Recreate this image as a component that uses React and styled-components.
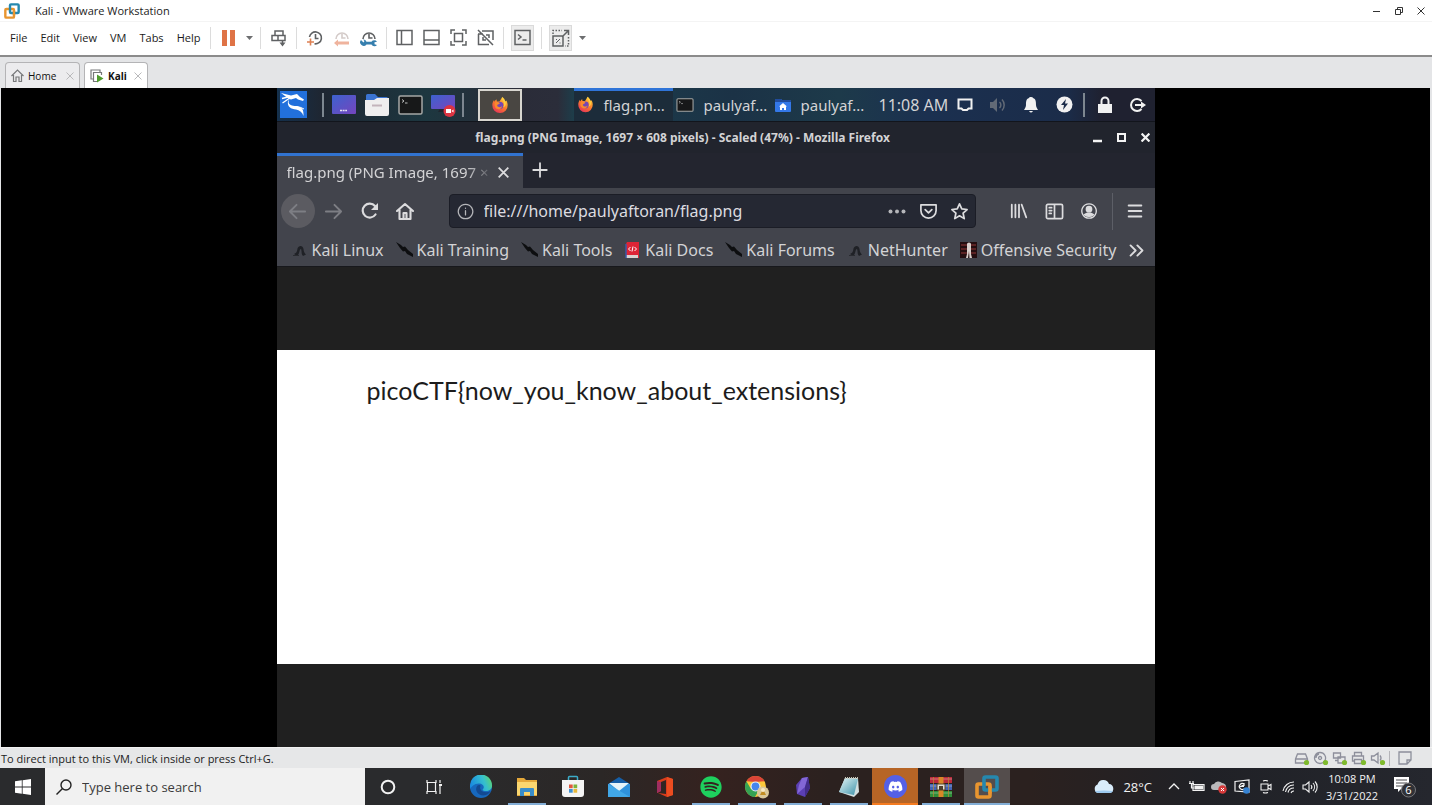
import React from "react";
import styled, { createGlobalStyle, css } from "styled-components";
import { FaDiscord, FaSpotify } from "react-icons/fa";

const GlobalStyle = createGlobalStyle`
  * {
    box-sizing: border-box;
  }
  body {
    margin: 0;
    background: #fff;
  }
  button, input {
    font: inherit;
    color: inherit;
    border: 0;
    padding: 0;
    margin: 0;
    background: none;
    outline: none;
  }
  svg {
    display: block;
    flex: none;
  }
`;

const Desktop = styled.div`
  min-height: 100vh;
  display: flex;
  flex-direction: column;
  font-family: "Open Sans", "Noto Sans", sans-serif;
  font-size: 11px;
  color: #1b1b1b;
`;

const Stroke = styled.svg.attrs({ fill: "none" })`
  stroke: currentColor;
  stroke-width: ${(p) => p.$w || 1.5};
`;

/* VMware window */

const TitleBar = styled.header`
  height: 22px;
  display: flex;
  align-items: center;
  padding-left: 4px;
  gap: 15px;
  border-bottom: 1px solid #f4f4f4;
`;

const WindowButtons = styled.div`
  display: flex;
  margin-left: auto;
`;

const WindowButton = styled.button`
  width: 22px;
  height: 20px;
  display: grid;
  place-items: center;
  color: #333;
`;

const MenuBar = styled.nav`
  height: 35px;
  display: flex;
  align-items: center;
  padding: 0 0 2px 3px;
  border-bottom: 2px solid #8b8b8b;
`;

const MenuItem = styled.button`
  padding: 0 6px 0 7px;
  height: 24px;
`;

const Separator = styled.span`
  width: 1px;
  height: 22px;
  margin: 0 4px;
  background: #dcdcdc;
`;

const Tool = styled.button`
  width: 27px;
  height: 26px;
  display: grid;
  place-items: center;
  color: #5f6163;
  ${(p) =>
    p.$pressed &&
    css`
      width: 23px;
      margin: 0 3px;
      background: #ececec;
      border: 1px solid #dadada;
    `}
`;

const Caret = styled.button`
  width: 14px;
  height: 24px;
  display: grid;
  place-items: center;
  color: #6d6e70;
`;

const TabStrip = styled.div`
  height: 31px;
  display: flex;
  align-items: flex-end;
  gap: 4px;
  padding-left: 5px;
  background: #e4e5e7;
`;

const VmTab = styled.button`
  height: 26px;
  width: ${(p) => (p.$active ? 64 : 75)}px;
  display: flex;
  align-items: center;
  padding: 0 5px;
  gap: 4px;
  border: 1px solid #b4b4b6;
  border-bottom: 0;
  border-radius: 4px 4px 0 0;
  background: ${(p) => (p.$active ? "#fff" : "#ececee")};
  font-size: 10px;
  font-weight: ${(p) => (p.$active ? 700 : 500)};
  color: #111;

  svg:last-child {
    margin-left: auto;
    color: #b9b9bb;
  }
`;

const Screen = styled.main`
  flex: 1;
  display: flex;
  justify-content: center;
  background: #000;
  border: solid #e4e5e7;
  border-width: 0 2px 0 1px;
`;

const StatusBar = styled.footer`
  height: 21px;
  display: flex;
  align-items: center;
  justify-content: space-between;
  background: #e6e7e8;
  padding: 0 20px 0 1px;
  border-top: 1px solid #f2f2f2;
`;

const Devices = styled.div`
  display: flex;
  align-items: center;
  gap: 3px;
  color: #8d8f9b;
`;

const DeviceDivider = styled.span`
  width: 1px;
  height: 15px;
  margin-right: 5px;
  background: #b5b5b9;
`;

/* Kali desktop inside the VM */

const Guest = styled.section`
  width: 100%;
  max-width: 878px;
  display: flex;
  flex-direction: column;
  background: #202020;
  color: #d3d3d5;
  font-family: "Noto Sans", sans-serif;
  font-size: 16px;
`;

const Panel = styled.div`
  height: 34px;
  display: flex;
  align-items: stretch;
  background: linear-gradient(90deg, #14304c 0, #1e2632 5%, #1d3740 17%, #2a2c38 27%, #2b2d3a 32%, #1c3f4c 34%, #1b3246 52%, #1d3a4a 64%, #1b3050 74%, #1b2c49 90%, #1f2130 94%);
  border-bottom: 1px solid #12151c;
`;

const PanelButton = styled.button`
  width: 33px;
  display: grid;
  place-items: center;
  color: ${(p) => (p.$dim ? "#626a76" : "#f1f1f1")};
`;

const PanelDivider = styled.span`
  width: 2px;
  height: 24px;
  align-self: center;
  margin: 0 4px 0 ${(p) => p.$before || 2}px;
  background: #7d8790;
`;

const Launcher = styled.button`
  width: 44px;
  height: 32px;
  margin: 1px 0 0 10px;
  display: grid;
  place-items: center;
  background: #494642;
  border: 2px solid #d8d6d0;
`;

const Tasks = styled.div`
  display: flex;
  margin-left: auto;
`;

const Task = styled.button`
  width: 99px;
  display: flex;
  align-items: center;
  gap: 10px;
  padding-left: 3px;
  font-size: 15px;
  white-space: nowrap;
  ${(p) =>
    p.$active &&
    css`
      background: linear-gradient(#2f74d8 3px, #1c2c3a 3px);
    `}
`;

const Time = styled.time`
  width: 78px;
  padding-left: 8px;
  align-self: center;
  white-space: nowrap;
`;

const FirefoxTitle = styled.div`
  height: 31px;
  display: flex;
  align-items: center;
  background: #21242d;
  font-size: 12px;
  font-weight: 700;
`;

const FirefoxButtons = styled.div`
  display: flex;
  gap: 6px;
  color: #f4f4f4;

  button {
    width: 18px;
    height: 24px;
    display: grid;
    place-items: center;
  }
`;

const WindowName = styled.span`
  flex: 1;
  text-align: center;
`;

const Tabs = styled.div`
  height: 35px;
  display: flex;
  background: #23252f;
`;

const PageTab = styled.div`
  width: 246px;
  display: flex;
  align-items: center;
  padding: 0 10px;
  background: #42444c;
  border-top: 3px solid #3173d0;
`;

const TabName = styled.span`
  flex: 1;
  font-size: 15px;
  white-space: nowrap;
  mask-image: linear-gradient(90deg, #000 86%, transparent);
`;

const PlainButton = styled.button`
  width: ${(p) => p.$width || 35}px;
  height: 34px;
  display: grid;
  place-items: center;
  border-radius: 50%;
  color: ${(p) => (p.$dim ? "#7d7e84" : "#dcdcde")};
  background: ${(p) => (p.$disc ? "#5b5b61" : "none")};
`;

const NavBar = styled.div`
  height: 46px;
  display: flex;
  align-items: center;
  padding: 0 2px 0 4px;
  background: #42444c;
`;

const Address = styled.label`
  flex: 1;
  height: 34px;
  margin: 0 26px;
  padding-left: 7px;
  display: flex;
  align-items: center;
  border: 1px solid #1b1d26;
  border-radius: 4px;
  background: #252833;
  color: #b5b6ba;

  input {
    flex: 1;
    min-width: 0;
    margin-left: 10px;
    color: #dcdce0;
  }
`;

const NavDivider = styled.span`
  width: 1px;
  height: 37px;
  margin: 0 5px;
  background: #5d5f67;
`;

const Bookmarks = styled.nav`
  height: 33px;
  display: flex;
  align-items: center;
  gap: 12px;
  padding: 0 10px 0 14px;
  background: #42444c;
  border-bottom: 1px solid #17181c;
`;

const Bookmark = styled.a`
  display: flex;
  align-items: center;
  gap: 4px;
  color: inherit;
  text-decoration: none;
  white-space: nowrap;
`;

const Viewer = styled.div`
  flex: 1;
  display: flex;
  flex-direction: column;
  justify-content: center;
`;

const FlagImage = styled.div`
  width: 100%;
  aspect-ratio: 878 / 314;
  padding: 22px 90px;
  background: #fff;
  color: #1c1c1c;
  font-family: Lato, sans-serif;
  font-size: 25px;
  line-height: 36px;
`;

/* Windows taskbar */

const Taskbar = styled.div`
  height: 37px;
  display: flex;
  background: linear-gradient(90deg, #2a2b2d 30%, #2b2726 42%, #35221f 50%, #2b211f 58%, #2b211f 72%, #202126 84%, #25272e);
  color: #f2f2f2;
`;

const TaskbarButton = styled.button`
  width: ${(p) => p.$width || 46}px;
  display: grid;
  place-items: center;
  background-color: ${(p) => p.$fill || "transparent"};
  ${(p) =>
    p.$line &&
    css`
      background-image: linear-gradient(${p.$line}, ${p.$line});
      background-repeat: no-repeat;
      background-position: bottom;
      background-size: ${p.$fill ? "100%" : "38px"} 2px;
    `}
`;

const Search = styled.label`
  width: 320px;
  display: flex;
  align-items: center;
  gap: 10px;
  padding-left: 11px;
  background: #f1f1f1;
  color: #222;
  font-size: 13px;

  input {
    flex: 1;
    min-width: 0;
  }
  input::placeholder {
    color: #3b3b3b;
    opacity: 1;
  }
`;

const Tray = styled.div`
  margin-left: auto;
  padding-right: 6px;
  display: flex;
  align-items: center;
`;

const Weather = styled.button`
  display: flex;
  align-items: center;
  gap: 8px;
  margin-right: 10px;
  font-size: 13px;
`;

const TrayButton = styled.button`
  width: ${(p) => p.$width || 23}px;
  height: 36px;
  display: grid;
  place-items: center;
`;

const Clock = styled.time`
  width: 64px;
  text-align: center;
  font-size: 11px;
  line-height: 17px;
`;

/* Icons */

const Cross = ({ size = 8, w = 1 }) => (
  <Stroke width={size} height={size} viewBox="0 0 8 8" $w={w}>
    <path d="M.5.5l7 7M7.5.5l-7 7" />
  </Stroke>
);

const VmwareLogo = ({ size = 15 }) => (
  <Stroke width={size} height={size} viewBox="0 0 24 24" $w={3.6}>
    <rect x="2" y="9" width="13" height="13" rx="1.5" stroke="#e8952f" />
    <rect x="9" y="2" width="13" height="13" rx="1.5" stroke="#2588ae" />
    <path d="M15 11.500v7" stroke="#e8952f" />
  </Stroke>
);

const Down = () => (
  <svg width="7" height="4" viewBox="0 0 7 4" fill="currentColor">
    <path d="M0 0h7L3.500 4z" />
  </svg>
);

const PauseIcon = () => (
  <svg width="13" height="16" viewBox="0 0 13 16" fill="#df7346">
    <path d="M0 0h5v16H0zM8 0h5v16H8z" />
  </svg>
);

const SendKeysIcon = () => (
  <Stroke width="18" height="18" viewBox="0 0 18 18">
    <path d="M5 6V2h8v4M2 6.500h13v5H2zM8 6.500v5M12.500 11v5" />
    <path d="M9.500 13.500h6l-3 4z" fill="currentColor" stroke="none" />
  </Stroke>
);

const SnapshotIcon = ({ kind }) => (
  <Stroke width="18" height="18" viewBox="0 0 18 18" $w={1.6}>
    <path
      d={kind === "take" ? "M3.500 8a6 6 0 1 1 5 6.800M9.500 5v4.500h3" : "M3 10a6 6 0 1 1 12 0M9 5v4h3.500"}
      stroke={kind === "revert" ? "#d4cbc9" : "currentColor"}
    />
    {kind === "take" && <path d="M1 13h7M4.500 9.500v7" stroke="#dd8053" />}
    {kind === "revert" && <path d="M5 10.500l-4 3.500 4 3.500v-2h11v-3H5z" fill="#efb39d" stroke="none" />}
    {kind === "manage" && (
      <path d="M1 11a3.500 3.500 0 0 0 5.500 4.500h5a3.300 3.300 0 0 0 5.500.5l-2.500-.7v-2l2.500-.6a3.300 3.300 0 0 0-5.500 0h-5A3.500 3.500 0 0 0 3 10.500l1.500 1.500-1 1.500z" fill="#367fae" stroke="none" />
    )}
  </Stroke>
);

const LayoutIcon = ({ d }) => (
  <Stroke width="17" height="17" viewBox="0 0 17 17">
    <path d={d} />
  </Stroke>
);

const DEVICE_PATHS = [
  "M1.500 8l2-5h8l2 5v4h-12zM1.500 8h12",
  "M7 1.500a5.500 5.500 0 1 0 .1 0zM7 5.500a1.500 1.500 0 1 0 .1 0zM3 7a4 4 0 0 1 3-4",
  "M1.500 2h7v5h-7zM6 6h7v6H6zM3 9.500h3",
  "M3.500 5V1.500h7V5M3.500 10h-2V5h11v5h-2M3.500 8.500h7v4h-7z",
  "M1.500 5h2.500l4-3v10L4 9H1.500zM10 4.500a4 4 0 0 1 0 5",
];

const DeviceIcon = ({ d }) => (
  <Stroke width="16" height="15" viewBox="0 0 16 15" $w={1.3}>
    <path d={d} />
    <circle cx="12.500" cy="11.500" r="2.600" fill="#7fba2d" stroke="none" />
  </Stroke>
);

const FirefoxIcon = ({ size = 18 }) => (
  <svg width={size} height={size} viewBox="0 0 20 20">
    <defs>
      <linearGradient id="fx" x1=".8" y1="0" x2=".2" y2="1">
        <stop offset="0" stopColor="#ffd83c" />
        <stop offset=".5" stopColor="#fc7a2c" />
        <stop offset="1" stopColor="#e52f5c" />
      </linearGradient>
    </defs>
    <path d="M10 19a8.500 8.500 0 0 1-8.500-9c0-2 .8-4 2-5.500v2L6 3.500l.5 2.500h3l3-5c2 1.500 3 3 3.500 5l1-1c1 1.500 1.500 3.500 1.500 5A8.500 8.500 0 0 1 10 19z" fill="url(#fx)" />
    <circle cx="9.800" cy="10.500" r="4" fill="#7447b5" />
    <path d="M4.500 7.500c2-1.500 4-1 5.500.5L8 9.500c-1.500 0-1.500 2 0 2.500 2 1 4 0 4.500-1.500 0 4-5 5.500-7.500 2.500-1-1.500-1.300-3.500-.5-5.500z" fill="#f98a2d" />
    <path d="M12.500 1c-1 3 1.500 4 2 7 .3 2-.3 3.500-1 4.500 2-.5 4-3 2.500-6.500z" fill="#ffce40" />
  </svg>
);

const TerminalIcon = ({ width = 25, height = 20 }) => (
  <svg width={width} height={height} viewBox="0 0 25 20">
    <rect x="1" y="1" width="23" height="18" rx="1.500" fill="#171819" stroke="#a5a7a5" strokeWidth="1.500" />
    <path d="M4 4.500l2 1.500-2 1.500M7 8h2.500" fill="none" stroke="#bfc0c0" />
  </svg>
);

const DisplayIcon = ({ record }) => (
  <svg width="26" height="24" viewBox="0 0 26 24">
    <defs>
      <linearGradient id="disp" x2="1" y2="1">
        <stop stopColor="#3d62cf" />
        <stop offset="1" stopColor="#7545bd" />
      </linearGradient>
    </defs>
    <rect x="1" y="2" width="24" height={record ? 14 : 19} rx="1" fill="url(#disp)" />
    {!record && <path d="M9 17.500h7" stroke="#e7e2f4" strokeWidth="1.500" strokeDasharray="2 .6" />}
    {record && (
      <>
        <path d="M10 16h5v3H8z" fill="#20242e" />
        <circle cx="19.500" cy="18" r="6" fill="#dc3442" />
        <path d="M16 16h5v4h-5zM21.500 18l2-1.500v3z" fill="#fff" />
      </>
    )}
  </svg>
);

const FilesIcon = () => (
  <svg width="26" height="24" viewBox="0 0 26 24">
    <path d="M2 10V2.500Q2 1 3.500 1H11l3 3h8.500Q24 4 24 5.500V10z" fill="#3b74d3" />
    <path d="M1 7h9l3-2h12v16q0 2-2 2H3q-2 0-2-2z" fill="#efeeee" />
    <path d="M8 12.500h10" stroke="#c3b4bb" strokeWidth="2" />
  </svg>
);

const HomeFolderIcon = () => (
  <svg width="16" height="14" viewBox="0 0 16 14">
    <path d="M0 1h6l1 1h9v11q0 1-1 1H1q-1 0-1-1z" fill="#3478e8" />
    <path d="M0 1h6l1 1h9v2H0z" fill="#214c9c" />
    <path d="M8 5l4 3.500h-1V12H9v-2H7v2H5V8.500H4z" fill="#fff" />
  </svg>
);

const KaliIcon = () => (
  <svg width="27" height="27" viewBox="0 0 27 27">
    <path d="M0 0h27v27H0z" fill="#2270dc" />
    <path d="M1 2l10 2.500L17 3l3 3 4 2.500-1 1.500-5-1.500-2-1.500-5 1.500-4-2z" fill="#fff" />
    <path d="M2 7.500l8-2M2.500 12l8-5.500" fill="none" stroke="#fff" strokeWidth="1.300" />
    <path d="M12 7c-4 1.500-5 6 0 7.500 3.500 1 7-.5 10 3 1.500 2 1.500 4.500 1.500 7.500-1.500-4-4-6-7.500-6.500C11 18 7 16 8 10z" fill="#fff" />
    <path d="M16 16.500q5-1 8 1.500" fill="none" stroke="#fff" />
  </svg>
);

const BookmarkIcon = ({ kind }) => (
  <svg width="17" height="18" viewBox="0 0 17 18">
    {kind === "kali" && (
      <>
        <path d="M3 13c3-1 3-3 3.500-5.500C7.500 4 12 4 12.500 8c.3 3 1 4 2.500 5.500L12 15c-2-2-1-5-2-7-2 0-1 5-4 7z" fill="#1f2126" />
        <path d="M2 14.500h6" stroke="#292b30" />
      </>
    )}
    {kind === "tool" && <path d="M0 1l5 3 2 2 2-.5L12 9l5 4v3l-6-3-2-3-2 .5L4 7z" fill="#0d0e10" />}
    {kind === "docs" && (
      <>
        <path d="M3 1h12v16H2V3z" fill="#dd2436" />
        <path d="M2 14h12v3H2z" fill="#d9d2d0" />
        <path d="M2 3v14" stroke="#3a58a8" strokeWidth="1.500" />
        <path d="M6.500 6L4.500 8l2 2M10.500 6l2 2-2 2M9 5.500L8 10.500" stroke="#fff" fill="none" />
      </>
    )}
    {kind === "offsec" && (
      <>
        <path d="M0 1h17v16H0z" fill="#240e10" />
        <path d="M1 4h15M1 8h15M1 12h15" stroke="#6d2a2a" strokeWidth="1.500" />
        <path d="M6 17l1-4V3q0-1.500 2-1.500T11 3v10l1 4h-2.500L9 10l-1 7z" fill="#d9cfcb" />
      </>
    )}
  </svg>
);

const EdgeIcon = () => (
  <svg width="24" height="24" viewBox="0 0 24 24">
    <defs>
      <linearGradient id="edge" x1="0" x2="1" y1=".5" y2=".2">
        <stop stopColor="#1a8be0" />
        <stop offset=".6" stopColor="#35bfcf" />
        <stop offset="1" stopColor="#5fd66a" />
      </linearGradient>
    </defs>
    <circle cx="12" cy="12" r="11" fill="#1768bd" />
    <path d="M1 11A11 11 0 0 1 23 10c.5 4-3 6-6 6-2.500 0-4-1-3-2 2-2 0-5.500-4-5.500C5 8.500 2 12 1.500 14z" fill="url(#edge)" />
    <path d="M8 11c-3 5 2 11 9 9 3-1 4-3 4.500-4-5 3-12 0-10-5 0-1-2-1.500-3.500 0z" fill="#134a92" />
  </svg>
);

const ExplorerIcon = () => (
  <svg width="22" height="20" viewBox="0 0 22 20">
    <path d="M1 1h7l2 2h11v16H1z" fill="#e4a83a" />
    <path d="M1 5h20v13H1z" fill="#fad66f" />
    <path d="M4 19v-7q0-1 1-1h12q1 0 1 1v7h-4v-4H8v4z" fill="#398dc9" />
  </svg>
);

const StoreIcon = () => (
  <svg width="24" height="23" viewBox="0 0 24 23">
    <path d="M7.500 6V2.500q0-1 1-1h7q1 0 1 1V6" fill="none" stroke="#3cacc8" strokeWidth="1.500" />
    <path d="M1 5h22v14q0 3-3 3H4q-3 0-3-3z" fill="#f4f4f4" />
    <path d="M8 9.500h3.700v3.700H8z" fill="#e2573b" />
    <path d="M12.500 9.500h3.700v3.700h-3.700z" fill="#7db43b" />
    <path d="M8 14h3.700v3.700H8z" fill="#3b91d4" />
    <path d="M12.500 14h3.700v3.700h-3.700z" fill="#e9b839" />
  </svg>
);

const MailIcon = () => (
  <svg width="24" height="22" viewBox="0 0 24 22">
    <path d="M1 8l11-7 11 7v3H1z" fill="#155ea7" />
    <path d="M1 8h22v13H1z" fill="#2f92dc" />
    <path d="M2 7h20l-10 8z" fill="#e6f4f9" />
    <path d="M1 8l22 13H1z" fill="#46acea" opacity=".8" />
  </svg>
);

const OfficeIcon = () => (
  <svg width="18" height="22" viewBox="0 0 18 22">
    <path d="M11 1l6 2v16l-6 2-9-4 8 1V4L5 6v9l-4 2V5z" fill="#da3c1b" />
    <path d="M1 5l4 1v9l-4 2z" fill="#a02d60" />
    <path d="M11 1l6 2v16l-6 2z" fill="#ec4c20" />
  </svg>
);

const ChromeIcon = () => (
  <svg width="26" height="24" viewBox="0 0 26 24">
    <circle cx="11.500" cy="11.500" r="10.500" fill="#fbc83b" />
    <path d="M2.400 6.200A10.500 10.500 0 0 1 20.600 6.200L11.500 7z" fill="#db4437" />
    <path d="M2.400 6.200A10.500 10.500 0 0 0 11 22l4.500-8H7z" fill="#35a354" />
    <circle cx="11.500" cy="11.500" r="5" fill="#f2f2f2" />
    <circle cx="11.500" cy="11.500" r="3.900" fill="#4686ec" />
    <circle cx="19" cy="17.500" r="6" fill="#d9c89b" />
    <path d="M16 20l3-6 3 6z" fill="#c08c22" />
    <circle cx="19" cy="15" r="2" fill="#f7e9c5" />
  </svg>
);

const ObsidianIcon = () => (
  <svg width="16" height="22" viewBox="0 0 16 22">
    <path d="M7 2l6-1 2 11-5 9-8-3L1 9z" fill="#5b3fb3" />
    <path d="M7 2l6-1-3 10-8 7L4 9z" fill="#8367d6" />
    <path d="M13 1l2 11-5 9V11z" fill="#432d8b" />
  </svg>
);

const NotepadIcon = () => (
  <svg width="22" height="22" viewBox="0 0 22 22">
    <defs>
      <linearGradient id="note" x2="1" y2="1">
        <stop stopColor="#e7f7f8" />
        <stop offset="1" stopColor="#3c91a8" />
      </linearGradient>
    </defs>
    <path d="M7 2h13l1 14-5 5-15-5z" fill="#d3dfe0" />
    <path d="M7 2l13 1-4 16-15-3z" fill="url(#note)" />
    <path d="M7 2h13" stroke="#c6c6b8" strokeWidth="2" strokeDasharray="1 1" />
  </svg>
);

const DiscordBadge = styled.span`
  width: 23px;
  height: 23px;
  display: grid;
  place-items: center;
  border-radius: 50%;
  background: #5460e6;
  color: #fff;
`;

const WinrarIcon = () => (
  <svg width="24" height="22" viewBox="0 0 24 22">
    <path d="M1 1h22v6H1z" fill="#b92a3b" />
    <path d="M1 8h22v6H1z" fill="#4364b3" />
    <path d="M1 15h22v6H1z" fill="#2f8d38" />
    <path d="M1 3h22M1 10h22M1 17h22" stroke="#fff" opacity=".35" />
    <path d="M9.500 1h5v20h-5z" fill="#d98727" />
    <path d="M8 8h8v6H8z" fill="#e3dfd4" stroke="#5a4526" />
    <path d="M10 10h4v4h-4z" fill="#4e3e2b" />
    <path d="M4.500 1v20M19.500 1v20" stroke="#b98a33" opacity=".7" />
  </svg>
);

const NavIcon = ({ d, size = 20, w = 1.8, children }) => (
  <Stroke width={size} height={size} viewBox="0 0 20 20" $w={w} strokeLinecap="round" strokeLinejoin="round">
    <path d={d} />
    {children}
  </Stroke>
);

const SpeakerIcon = () => (
  <Stroke width="18" height="16" viewBox="0 0 18 16">
    <path d="M1 5h3l4-4v14l-4-4H1z" fill="currentColor" stroke="none" />
    <path d="M10.500 5a4 4 0 0 1 0 6M13 2.500a8 8 0 0 1 0 11" />
  </Stroke>
);

const menus = ["File", "Edit", "View", "VM", "Tabs", "Help"];

const layouts = [
  ["Library", "M1 1.500h15v14H1zM5.500 1.500v14"],
  ["Thumbnails", "M1 1.500h15v14H1zM1 11h15"],
  ["Full screen", "M1 5V1h4M12 1h4v4M16 12v4h-4M5 16H1v-4M4.500 4.500h8v8h-8z"],
  ["Unity", "M5 2h11v9M1 5h5M1.500 5v10.500H12M9 6h3v3M6 8v3h3M1 1l15 15"],
];

const bookmarks = [
  ["Kali Linux", "kali"],
  ["Kali Training", "tool"],
  ["Kali Tools", "tool"],
  ["Kali Docs", "docs"],
  ["Kali Forums", "tool"],
  ["NetHunter", "kali"],
  ["Offensive Security", "offsec"],
];

const OPEN = "#83aed6";

const apps = [
  { name: "Edge", icon: <EdgeIcon /> },
  { name: "File Explorer", icon: <ExplorerIcon />, line: OPEN },
  { name: "Store", icon: <StoreIcon /> },
  { name: "Mail", icon: <MailIcon /> },
  { name: "Office", icon: <OfficeIcon /> },
  { name: "Spotify", icon: <FaSpotify size={22} color="#1ed05e" />, line: OPEN },
  { name: "Chrome", icon: <ChromeIcon />, line: OPEN },
  { name: "Obsidian", icon: <ObsidianIcon />, line: OPEN },
  { name: "Notepad", icon: <NotepadIcon />, line: OPEN },
  {
    name: "Discord",
    icon: (
      <DiscordBadge>
        <FaDiscord size={15} />
      </DiscordBadge>
    ),
    fill: "#b66526",
    line: "#f47b20",
  },
  { name: "WinRAR", icon: <WinrarIcon />, line: OPEN },
  { name: "VMware", icon: <VmwareLogo size={24} />, line: OPEN, fill: "#544d4c" },
];

const VmToolbar = () => (
  <MenuBar>
    {menus.map((name) => (
      <MenuItem key={name}>{name}</MenuItem>
    ))}
    <Separator />
    <Tool aria-label="Suspend"><PauseIcon /></Tool>
    <Caret aria-label="Power options"><Down /></Caret>
    <Separator />
    <Tool aria-label="Send Ctrl+Alt+Del"><SendKeysIcon /></Tool>
    <Separator />
    <Tool aria-label="Take snapshot"><SnapshotIcon kind="take" /></Tool>
    <Tool aria-label="Revert snapshot"><SnapshotIcon kind="revert" /></Tool>
    <Tool aria-label="Manage snapshots"><SnapshotIcon kind="manage" /></Tool>
    <Separator />
    {layouts.map(([name, d]) => (
      <Tool key={name} aria-label={name}><LayoutIcon d={d} /></Tool>
    ))}
    <Separator />
    <Tool $pressed aria-label="Console view">
      <LayoutIcon d="M1 1.500h15v14H1zM4 5.500l3 2.500-3 2.500M8.500 11h4" />
    </Tool>
    <Separator />
    <Tool $pressed aria-label="Stretch guest">
      <Stroke width="18" height="18" viewBox="0 0 18 18">
        <path d="M1 7h10v10H1zM10 8l6-6M12 1.500h4.500V6" />
        <path d="M4 14l4-4M4 10.500h1M7.500 14h1" strokeWidth="1" />
        <path d="M1 5V1.500h9M16.500 8v9H13" strokeDasharray="1.500 1.500" />
      </Stroke>
    </Tool>
    <Caret aria-label="Stretch options"><Down /></Caret>
  </MenuBar>
);

const KaliPanel = () => (
  <Panel>
    <PanelButton aria-label="Applications"><KaliIcon /></PanelButton>
    <PanelDivider $before={12} />
    <PanelButton aria-label="Show desktop"><DisplayIcon /></PanelButton>
    <PanelButton aria-label="Files"><FilesIcon /></PanelButton>
    <PanelButton aria-label="Terminal"><TerminalIcon /></PanelButton>
    <PanelButton aria-label="Recorder"><DisplayIcon record /></PanelButton>
    <PanelDivider />
    <Launcher aria-label="Firefox"><FirefoxIcon /></Launcher>
    <Tasks>
      <Task $active><FirefoxIcon size={17} />flag.pn...</Task>
      <Task><TerminalIcon width={18} height={14} />paulyaf...</Task>
      <Task><HomeFolderIcon />paulyaf...</Task>
    </Tasks>
    <Time>11:08 AM</Time>
    <PanelButton aria-label="Display">
      <Stroke width="16" height="14" viewBox="0 0 16 14" $w={2}>
        <path d="M1.500 1.500h13v9h-3l-1.500 1.500H6L4.500 10.500h-3z" />
      </Stroke>
    </PanelButton>
    <PanelButton $dim aria-label="Volume"><SpeakerIcon /></PanelButton>
    <PanelButton aria-label="Notifications">
      <svg width="16" height="18" viewBox="0 0 16 18" fill="currentColor">
        <path d="M8 1q2 0 2 1c3 1 3 4 3 7 0 2 1 3 2 5H1c1-2 2-3 2-5 0-3 0-6 3-7 0-1 1-1 2-1zM6 15h4q-2 3-4 0z" />
      </svg>
    </PanelButton>
    <PanelButton aria-label="Power">
      <svg width="17" height="17" viewBox="0 0 17 17">
        <circle cx="8.500" cy="8.500" r="8" fill="currentColor" />
        <path d="M10 3L5 9h3l-1 5 5-6.500H9z" fill="#1b2c49" />
      </svg>
    </PanelButton>
    <PanelDivider />
    <PanelButton aria-label="Lock">
      <svg width="16" height="18" viewBox="0 0 16 18">
        <path d="M1 8h14v9H1z" fill="currentColor" />
        <path d="M4.500 8V5a3.500 3.500 0 0 1 7 0v3" fill="none" stroke="currentColor" strokeWidth="2" />
      </svg>
    </PanelButton>
    <PanelButton aria-label="Log out">
      <Stroke width="18" height="16" viewBox="0 0 18 16" $w={2}>
        <path d="M12.500 4A6 6 0 1 0 12.500 12M6 8h8" />
        <path d="M12 4.500l5 3.500-5 3.500z" fill="currentColor" stroke="none" />
      </Stroke>
    </PanelButton>
  </Panel>
);

const Firefox = () => (
  <>
    <FirefoxTitle>
      <WindowName>flag.png (PNG Image, 1697 × 608 pixels) - Scaled (47%) - Mozilla Firefox</WindowName>
      <FirefoxButtons>
        <button aria-label="Minimize">
          <Stroke width="10" height="10" viewBox="0 0 10 10" $w={2.5}><path d="M0 8h9" /></Stroke>
        </button>
        <button aria-label="Maximize">
          <Stroke width="9" height="9" viewBox="0 0 9 9" $w={2}><path d="M1 1h7v7H1z" /></Stroke>
        </button>
        <button aria-label="Close"><Cross size={9} w={2} /></button>
      </FirefoxButtons>
    </FirefoxTitle>
    <Tabs>
      <PageTab>
        <TabName>flag.png (PNG Image, 1697 ×</TabName>
        <PlainButton $width={18} aria-label="Close tab"><Cross size={11} w={1.3} /></PlainButton>
      </PageTab>
      <PlainButton aria-label="New tab">
        <NavIcon d="M10 2.500v15M2.500 10h15" size={18} w={2} />
      </PlainButton>
    </Tabs>
    <NavBar>
      <PlainButton $width={34} $dim $disc aria-label="Back"><NavIcon d="M18 10H2M9 3l-7 7 7 7" size={19} w={2} /></PlainButton>
      <PlainButton $width={38} $dim aria-label="Forward"><NavIcon d="M2 10h16M11 3l7 7-7 7" size={19} w={2} /></PlainButton>
      <PlainButton aria-label="Reload">
        <NavIcon d="M15.500 13.500A7 7 0 1 1 15 5" w={2.2}>
          <path d="M18 2v7h-7z" fill="currentColor" stroke="none" />
        </NavIcon>
      </PlainButton>
      <PlainButton aria-label="Home">
        <NavIcon d="M2 10l8-7 8 7M4.500 9v9h11V9M8.500 17v-5h3v5" w={2.1} />
      </PlainButton>
      <Address>
        <NavIcon d="M10 1.500a8.500 8.500 0 1 0 .1 0zM10 9v5M10 6v.2" size={17} w={1.5} />
        <input aria-label="Address" defaultValue="file:///home/paulyaftoran/flag.png" />
        <PlainButton $width={31} aria-label="Page actions">
          <svg width="18" height="5" viewBox="0 0 18 5" fill="#b5b6ba">
            <circle cx="2.500" cy="2.500" r="2" /><circle cx="9" cy="2.500" r="2" /><circle cx="15.500" cy="2.500" r="2" />
          </svg>
        </PlainButton>
        <PlainButton $width={31} aria-label="Pocket">
          <NavIcon d="M2 3h16v6a8 8 0 0 1-16 0zM6.500 8l3.500 3.500L13.500 8" size={19} />
        </PlainButton>
        <PlainButton $width={31} aria-label="Bookmark">
          <NavIcon d="M10 2l2.400 5.300 5.600.6-4.200 3.900 1.200 5.700-5-3-5 3 1.200-5.700L2 7.900l5.600-.6z" size={19} />
        </PlainButton>
      </Address>
      <PlainButton aria-label="Library">
        <NavIcon d="M2 3v14M6 3v14M10 3v14M13 3l5 14" size={18} w={2} />
      </PlainButton>
      <PlainButton aria-label="Sidebar">
        <NavIcon d="M3 2.500h14a1.500 1.500 0 0 1 1.500 1.500v12a1.500 1.500 0 0 1-1.500 1.500H3A1.500 1.500 0 0 1 1.500 16V4A1.500 1.500 0 0 1 3 2.500zM10 3v14M4.500 6h2.500M4.500 9h2.500M4.500 12h2" size={19} />
      </PlainButton>
      <PlainButton aria-label="Account">
        <NavIcon d="M10 2a8 8 0 1 0 .1 0z" size={18} w={1.5}>
          <circle cx="10" cy="8" r="3" fill="currentColor" />
          <path d="M5 14q5-3 10 0-5 4-10 0z" fill="currentColor" />
        </NavIcon>
      </PlainButton>
      <NavDivider />
      <PlainButton aria-label="Menu">
        <NavIcon d="M3 4h14M3 10h14M3 16h14" size={18} w={2.2} />
      </PlainButton>
    </NavBar>
    <Bookmarks>
      {bookmarks.map(([name, kind]) => (
        <Bookmark key={name} href="#">
          <BookmarkIcon kind={kind} />
          {name}
        </Bookmark>
      ))}
      <PlainButton $width={18} aria-label="More bookmarks">
        <NavIcon d="M3 4l6 6-6 6M11 4l6 6-6 6" size={17} w={2.2} />
      </PlainButton>
    </Bookmarks>
    <Viewer>
      <FlagImage>picoCTF&#123;now_you_know_about_extensions&#125;</FlagImage>
    </Viewer>
  </>
);

const WindowsTaskbar = () => (
  <Taskbar>
    <TaskbarButton $width={45} aria-label="Start">
      <svg width="16" height="16" viewBox="0 0 16 16" fill="#fff">
        <path d="M0 2.300l6.800-1v6.300H0zM7.600 1.200L16 0v7.600H7.600zM0 8.400h6.800v6.300L0 13.700zM7.600 8.400H16V16l-8.400-1.200z" />
      </svg>
    </TaskbarButton>
    <Search>
      <Stroke width="16" height="16" viewBox="0 0 16 16" $w={1.4}>
        <circle cx="10" cy="6" r="5" />
        <path d="M6.500 9.500l-6 6" />
      </Stroke>
      <input aria-label="Search" placeholder="Type here to search" />
    </Search>
    <TaskbarButton aria-label="Cortana">
      <Stroke width="16" height="16" viewBox="0 0 16 16" $w={2}><circle cx="8" cy="8" r="6.300" /></Stroke>
    </TaskbarButton>
    <TaskbarButton $width={47} aria-label="Task view">
      <Stroke width="17" height="16" viewBox="0 0 17 16" $w={1.2}>
        <path d="M1 1v2.500h9V1M1 15v-2.500h9V15M1.500 3.500v9M9.500 3.500v9M14 1v3M14 7v8" />
        <path d="M13 5h3v2h-3z" fill="currentColor" stroke="none" />
      </Stroke>
    </TaskbarButton>
    {apps.map((app) => (
      <TaskbarButton key={app.name} aria-label={app.name} $fill={app.fill} $line={app.line}>
        {app.icon}
      </TaskbarButton>
    ))}
    <Tray>
      <Weather>
        <svg width="22" height="15" viewBox="0 0 22 15">
          <path d="M5 14a4.500 4.500 0 0 1-.5-8.500A6 6 0 0 1 16 5a4.600 4.600 0 0 1 1 9z" fill="#d9ecfa" />
          <path d="M2 12q9-1 18 0-1 2-3 2H5q-2 0-3-2z" fill="#9dc9ee" />
        </svg>
        28°C
      </Weather>
      <TrayButton aria-label="Show hidden icons">
        <Stroke width="12" height="7" viewBox="0 0 12 7" $w={1.3}><path d="M1 6l5-5 5 5" /></Stroke>
      </TrayButton>
      <TrayButton aria-label="Battery">
        <Stroke width="16" height="12" viewBox="0 0 16 12" $w={1.2}>
          <path d="M4 3.500h11v6H4z" />
          <path d="M6 5h7.500v3H6z" fill="currentColor" />
          <path d="M1 0v3M4 0v3M0 2.500h5M2.500 3v4H5" />
        </Stroke>
      </TrayButton>
      <TrayButton aria-label="OneDrive">
        <svg width="17" height="14" viewBox="0 0 17 14">
          <path d="M3 10a3 3 0 0 1 0-6 5 5 0 0 1 8-1 4 4 0 0 1 4 5v2z" fill="#b9b9bb" />
          <circle cx="11.500" cy="9.500" r="4.200" fill="#d63a3b" />
          <path d="M10 8l3 3M13 8l-3 3" stroke="#fff" />
        </svg>
      </TrayButton>
      <TrayButton aria-label="Updates">
        <Stroke width="17" height="15" viewBox="0 0 17 15" $w={1.2}>
          <path d="M1 2.500L15 1v12l-14-1zM10 5a3 3 0 1 0 0 5M10 4v2.500H7.500M6 7.500h4" />
          <circle cx="12.500" cy="11.500" r="3.300" fill="#3683d3" stroke="none" />
        </Stroke>
      </TrayButton>
      <TrayButton aria-label="Meet now">
        <Stroke width="12" height="14" viewBox="0 0 12 14" $w={1.1}>
          <path d="M3 1q2-1 5 0M1 4h7v6H1zM8 6l3-1.500v5L8 8M3 12.500q2 1 5 0" />
        </Stroke>
      </TrayButton>
      <TrayButton aria-label="Network">
        <Stroke width="14" height="14" viewBox="0 0 14 14" $w={1.1}>
          <path d="M1 11A11 11 0 0 1 12 2M3.500 12A8 8 0 0 1 12 5M6 12.500A6 6 0 0 1 12 8M9 13a3 3 0 0 1 3-2" />
        </Stroke>
      </TrayButton>
      <TrayButton $width={20} aria-label="Volume">
        <Stroke width="16" height="14" viewBox="0 0 16 14" $w={1.1}>
          <path d="M1 5h2.500L7 2v10L3.500 9H1zM9 5a3 3 0 0 1 0 4M11 3a6 6 0 0 1 0 8M13 1.500a8 8 0 0 1 0 11" />
        </Stroke>
      </TrayButton>
      <Clock>
        10:08 PM
        <br />
        3/31/2022
      </Clock>
      <TrayButton $width={42} aria-label="6 notifications">
        <svg width="24" height="22" viewBox="0 0 24 22">
          <path d="M1 1h15v12H8l-3 3v-3H1z" fill="#fff" />
          <path d="M3 4h11M3 7h11M3 10h7" stroke="#4c4c50" />
          <circle cx="15.500" cy="14" r="7" fill="#303136" stroke="#77777b" />
          <text x="15.500" y="18" fill="#fff" fontSize="11" textAnchor="middle">6</text>
        </svg>
      </TrayButton>
    </Tray>
  </Taskbar>
);

const App = () => (
  <Desktop>
    <GlobalStyle />
    <TitleBar>
      <VmwareLogo size={16} />
      Kali - VMware Workstation
      <WindowButtons>
        <WindowButton aria-label="Minimize">
          <Stroke width="8" height="8" viewBox="0 0 8 8" $w={1}><path d="M0 4.500h7" /></Stroke>
        </WindowButton>
        <WindowButton aria-label="Restore">
          <Stroke width="8" height="8" viewBox="0 0 8 8" $w={1}><path d="M.5 2.500h5v5h-5zM2.500 2V.5h5v5H6" /></Stroke>
        </WindowButton>
        <WindowButton aria-label="Close"><Cross /></WindowButton>
      </WindowButtons>
    </TitleBar>
    <VmToolbar />
    <TabStrip>
      <VmTab>
        <Stroke width="13" height="13" viewBox="0 0 13 13" $w={1.2} color="#77787a">
          <path d="M.5 7l6-6 6 6M2.500 6v6.500h2.500V8h3v4.500h2.500V6" />
        </Stroke>
        Home
        <Cross />
      </VmTab>
      <VmTab $active>
        <Stroke width="14" height="14" viewBox="0 0 14 14" $w={1.2} color="#77787a">
          <path d="M3 10H1V1h9v2M11.500 6V3.500h-8v9H7" />
          <path d="M7 5.500l6.500 4L7 13.500z" fill="#4f9b2d" stroke="none" />
        </Stroke>
        Kali
        <Cross />
      </VmTab>
    </TabStrip>
    <Screen>
      <Guest>
        <KaliPanel />
        <Firefox />
      </Guest>
    </Screen>
    <StatusBar>
      To direct input to this VM, click inside or press Ctrl+G.
      <Devices>
        {DEVICE_PATHS.map((d) => (
          <DeviceIcon key={d} d={d} />
        ))}
        <DeviceDivider />
        <Stroke width="14" height="14" viewBox="0 0 14 14" $w={1.3}>
          <path d="M1 1h12v8l-4 4H1zM13 9H9v4" />
        </Stroke>
      </Devices>
    </StatusBar>
    <WindowsTaskbar />
  </Desktop>
);

export default App;
